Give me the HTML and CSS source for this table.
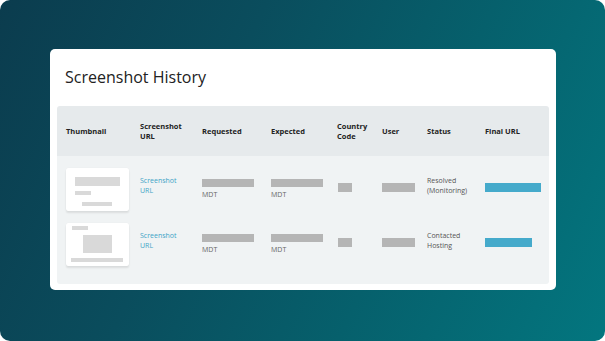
FILE: index.html
```html
<!DOCTYPE html>
<html>
<head>
<meta charset="utf-8">
<link rel="stylesheet" href="styles.css">
</head>
<body>
<div class="frame">
  <div class="card">
    <h1 class="title">Screenshot History</h1>
    <div class="table">
      <div class="row head">
        <div>Thumbnail</div>
        <div>Screenshot<br>URL</div>
        <div>Requested</div>
        <div>Expected</div>
        <div>Country<br>Code</div>
        <div>User</div>
        <div>Status</div>
        <div>Final URL</div>
      </div>
      <div class="body">
        <div class="row item">
          <div class="thumb t1">
            <span class="b1"></span>
            <span class="b2"></span>
            <span class="b3"></span>
          </div>
          <div class="cell-text link">Screenshot<br>URL</div>
          <div class="cell-date"><span class="bar date-bar"></span><span class="tz">MDT</span></div>
          <div class="cell-date"><span class="bar date-bar"></span><span class="tz">MDT</span></div>
          <div class="cell-small"><span class="bar cc"></span></div>
          <div class="cell-small"><span class="bar user"></span></div>
          <div class="cell-text status">Resolved<br>(Monitoring)</div>
          <div class="cell-small"><span class="url url-long"></span></div>
        </div>
        <div class="row item">
          <div class="thumb t2">
            <span class="c1"></span>
            <span class="c2"></span>
            <span class="c3"></span>
          </div>
          <div class="cell-text link">Screenshot<br>URL</div>
          <div class="cell-date"><span class="bar date-bar"></span><span class="tz">MDT</span></div>
          <div class="cell-date"><span class="bar date-bar"></span><span class="tz">MDT</span></div>
          <div class="cell-small"><span class="bar cc"></span></div>
          <div class="cell-small"><span class="bar user"></span></div>
          <div class="cell-text status">Contacted<br>Hosting</div>
          <div class="cell-small"><span class="url url-short"></span></div>
        </div>
      </div>
    </div>
  </div>
</div>
</body>
</html>
```

FILE: styles.css
```css
* { box-sizing: border-box; }
html, body { margin: 0; padding: 0; background: #ffffff; }
body { font-family: "Open Sans", "Noto Sans", sans-serif; }

.frame {
  width: 605px;
  height: 341px;
  border-radius: 10px;
  background: linear-gradient(115deg, #0b3c4e 0%, #0a4d5d 35%, #06606c 65%, #03767f 100%);
  padding: 49px 49px 0 50px;
}

.card {
  height: 241px;
  background: #ffffff;
  border-radius: 5px;
  padding: 18px 7px 6px 7px;
  display: flex;
  flex-direction: column;
}

.title {
  margin: 0 0 19px 8px;
  font-size: 16px;
  line-height: 20px;
  font-weight: 400;
  color: #222222;
}

.table {
  flex: 1;
  border-radius: 3px;
  overflow: hidden;
  display: flex;
  flex-direction: column;
}

.row {
  display: grid;
  grid-template-columns: 74px 62px 69px 66px 45px 45px 58px 1fr;
  padding-left: 9px;
}

.head {
  height: 50px;
  background: #e6eaec;
  align-items: center;
  font-size: 7.5px;
  line-height: 10px;
  font-weight: 700;
  color: #222222;
}

.body {
  flex: 1;
  background: #f0f3f4;
  padding-top: 12px;
  display: flex;
  flex-direction: column;
  gap: 12px;
}

.item {
  height: 43px;
  align-items: start;
}

.thumb {
  width: 63px;
  height: 43px;
  background: #ffffff;
  border-radius: 2px;
  box-shadow: 0 2px 2px rgba(0, 0, 0, 0.09), 0 0 1px rgba(0, 0, 0, 0.08);
  display: flex;
  flex-direction: column;
  align-items: flex-start;
}
.thumb span { display: block; background: #d9d9d9; }

.t1 { padding: 9px 0 0 9px; }
.t1 .b1 { width: 45px; height: 9px; }
.t1 .b2 { width: 16px; height: 4px; margin-top: 5px; }
.t1 .b3 { width: 30px; height: 4px; margin-top: 7px; margin-left: 7px; }

.t2 { padding: 3px 0 0 6px; }
.t2 .c1 { width: 16px; height: 4px; }
.t2 .c2 { width: 29px; height: 18px; margin-top: 5px; margin-left: 11px; }
.t2 .c3 { width: 52px; height: 4px; margin-top: 5px; margin-left: -1px; }

.cell-text {
  padding-top: 8px;
  font-size: 7px;
  line-height: 10px;
}
.link { color: #3ea3c6; }
.status { color: #555555; }

.cell-date {
  padding-top: 11px;
  display: flex;
  flex-direction: column;
  align-items: flex-start;
}
.bar { display: block; background: #b5b5b5; }
.date-bar { width: 52px; height: 8px; margin-bottom: 3px; }
.tz { font-size: 7px; line-height: 10px; color: #666666; }

.cell-small { padding-top: 15px; }
.cc { width: 14px; height: 9px; margin-left: 1px; }
.user { width: 33px; height: 9px; }
.url { display: block; height: 9px; background: #45aacb; }
.url-long { width: 56px; }
.url-short { width: 47px; }
```
